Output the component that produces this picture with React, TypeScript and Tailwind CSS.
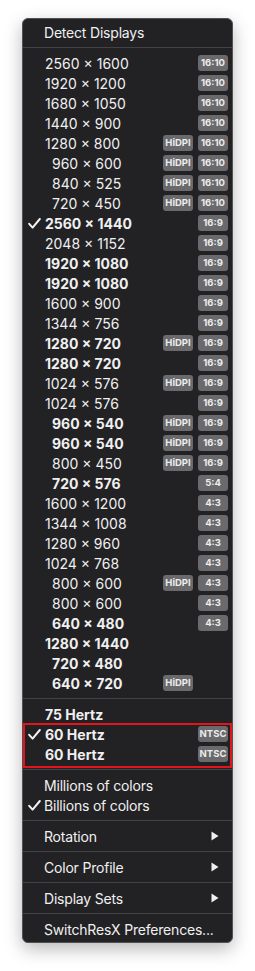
import React from "react";

type Row = { t: string; b?: boolean; ind?: boolean; hi?: boolean; r?: string; c?: boolean };

const rows: Row[] = [
  { t: "2560 × 1600", r: "16:10" },
  { t: "1920 × 1200", r: "16:10" },
  { t: "1680 × 1050", r: "16:10" },
  { t: "1440 × 900", r: "16:10" },
  { t: "1280 × 800", hi: true, r: "16:10" },
  { t: "960 × 600", ind: true, hi: true, r: "16:10" },
  { t: "840 × 525", ind: true, hi: true, r: "16:10" },
  { t: "720 × 450", ind: true, hi: true, r: "16:10" },
  { t: "2560 × 1440", b: true, r: "16:9", c: true },
  { t: "2048 × 1152", r: "16:9" },
  { t: "1920 × 1080", b: true, r: "16:9" },
  { t: "1920 × 1080", b: true, r: "16:9" },
  { t: "1600 × 900", r: "16:9" },
  { t: "1344 × 756", r: "16:9" },
  { t: "1280 × 720", b: true, hi: true, r: "16:9" },
  { t: "1280 × 720", b: true, r: "16:9" },
  { t: "1024 × 576", hi: true, r: "16:9" },
  { t: "1024 × 576", r: "16:9" },
  { t: "960 × 540", ind: true, b: true, hi: true, r: "16:9" },
  { t: "960 × 540", ind: true, b: true, hi: true, r: "16:9" },
  { t: "800 × 450", ind: true, hi: true, r: "16:9" },
  { t: "720 × 576", ind: true, b: true, r: "5:4" },
  { t: "1600 × 1200", r: "4:3" },
  { t: "1344 × 1008", r: "4:3" },
  { t: "1280 × 960", r: "4:3" },
  { t: "1024 × 768", r: "4:3" },
  { t: "800 × 600", ind: true, hi: true, r: "4:3" },
  { t: "800 × 600", ind: true, r: "4:3" },
  { t: "640 × 480", ind: true, b: true, r: "4:3" },
  { t: "1280 × 1440", b: true },
  { t: "720 × 480", ind: true, b: true },
  { t: "640 × 720", ind: true, b: true, hi: true },
];

function Check() {
  return (
    <svg width="13" height="11" viewBox="0 0 13 11" className="ml-[5px]">
      <path d="M1.2 5.8 L4.6 9.6 L11.8 1" fill="none" stroke="#f2f2f2" strokeWidth="2" strokeLinecap="round" strokeLinejoin="round" />
    </svg>
  );
}

function Badge({ children }: { children: React.ReactNode }) {
  return (
    <div className="w-[30px] h-4 rounded-[3px] bg-[#6a6a6c] flex items-center justify-center text-[9.5px] font-bold text-[#ececec] leading-none">
      {children}
    </div>
  );
}

function Sep() {
  return <div className="my-[5px] h-px bg-[#434346]" />;
}

function Item({ children, check, bold, arrow }: { children: React.ReactNode; check?: boolean; bold?: boolean; arrow?: boolean }) {
  return (
    <div className="h-5 flex items-center">
      <div className="w-[21px] shrink-0 flex items-center">{check && <Check />}</div>
      <span className={`text-[14px] tracking-[-0.2px] text-[#f0f0f0] ${bold ? "font-bold" : ""}`}>{children}</span>
      {arrow && (
        <svg width="8" height="10" viewBox="0 0 8 10" className="ml-auto mr-[13px]">
          <path d="M0.5 0.5 L7.5 5 L0.5 9.5 Z" fill="#f0f0f0" />
        </svg>
      )}
    </div>
  );
}

export default function App() {
  return (
    <div className="w-[255px] h-[971px] bg-white pt-[18px]" style={{ fontFamily: "Inter, 'Noto Sans', sans-serif" }}>
      <div className="mx-auto w-[211px] rounded-[6px] border border-[#515154] bg-[#222225] pt-[3px] pb-[3px] shadow-[0_6px_18px_rgba(0,0,0,0.28)]">
        <Item>Detect Displays</Item>
        <Sep />
        {rows.map((r, i) => (
          <div key={i} className="h-5 flex items-center">
            <div className="w-[22px] shrink-0 flex items-center">{r.c && <Check />}</div>
            <span
              className={`text-[14px] text-[#f0f0f0] ${r.b ? "font-bold" : ""} ${r.ind ? "pl-[7px]" : ""}`}
            >
              {r.t}
            </span>
            <div className="ml-auto mr-[4px] flex gap-[5px]">
              <div className="w-[30px]">{r.hi && <Badge>HiDPI</Badge>}</div>
              <div className="w-[30px]">{r.r && <Badge>{r.r}</Badge>}</div>
            </div>
          </div>
        ))}
        <Sep />
        <div className="h-5 flex items-center">
          <div className="w-[22px] shrink-0" />
          <span className="text-[14px] font-bold text-[#f0f0f0]">75 Hertz</span>
        </div>
        <div className="relative">
          {[true, false].map((c, i) => (
            <div key={i} className="h-5 flex items-center">
              <div className="w-[22px] shrink-0 flex items-center">{c && <Check />}</div>
              <span className="text-[14px] font-bold text-[#f0f0f0]">60 Hertz</span>
              <div className="ml-auto mr-[4px]">
                <Badge>NTSC</Badge>
              </div>
            </div>
          ))}
          <div className="absolute left-0 right-0 -top-px -bottom-[4px] border-2 border-[#e3141b] pointer-events-none" />
        </div>
        <Sep />
        <Item>Millions of colors</Item>
        <Item check>Billions of colors</Item>
        <Sep />
        <Item arrow>Rotation</Item>
        <Sep />
        <Item arrow>Color Profile</Item>
        <Sep />
        <Item arrow>Display Sets</Item>
        <Sep />
        <Item>SwitchResX Preferences...</Item>
      </div>
    </div>
  );
}
